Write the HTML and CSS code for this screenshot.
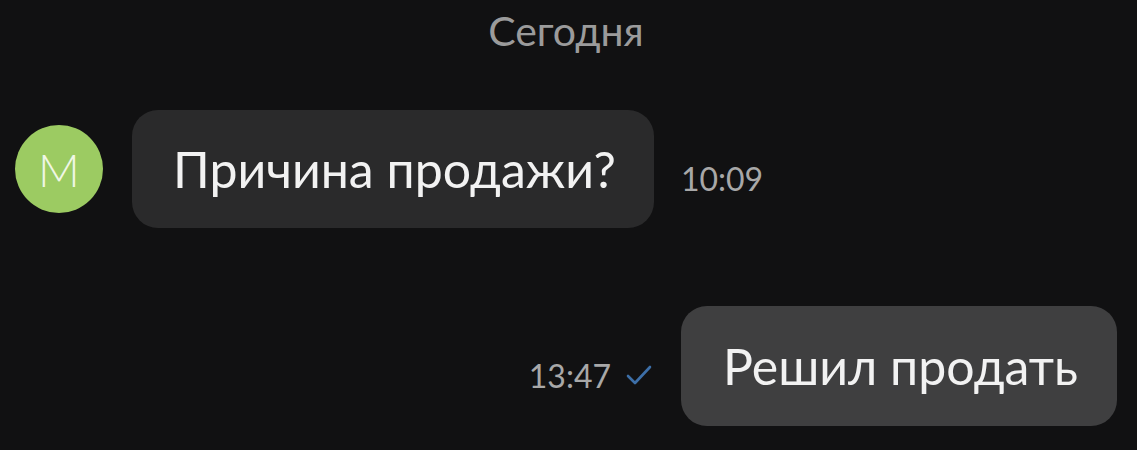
FILE: index.html
```html
<!DOCTYPE html>
<html lang="ru">
<head>
    <meta charset="UTF-8">
    <meta name="viewport" content="width=device-width, initial-scale=1.0">
    <title>Чат</title>
    <link rel="stylesheet" href="styles.css">
</head>
<body>
    <div class="chat">
        <div class="day">Сегодня</div>

        <div class="row incoming">
            <div class="avatar">M</div>
            <div class="bubble">Причина продажи?</div>
            <span class="time">10:09</span>
        </div>

        <div class="row outgoing">
            <span class="time">13:47</span>
            <svg class="check" width="28" height="22" viewBox="0 0 28 22">
                <path d="M3 12 L10 19 L25 3" fill="none" stroke="#3d6fa8" stroke-width="2.6" stroke-linecap="round" stroke-linejoin="round"/>
            </svg>
            <div class="bubble own">Решил продать</div>
        </div>
    </div>
</body>
</html>
```

FILE: styles.css
```css
* {
    margin: 0;
    padding: 0;
    box-sizing: border-box;
    font-family: Lato, "Noto Sans", sans-serif;
}

body {
    background-color: #111112;
    width: 1137px;
    height: 450px;
    overflow: hidden;
}

.chat {
    display: flex;
    flex-direction: column;
    padding: 0 20px 0 15px;
}

.day {
    text-align: center;
    color: #9b9b9b;
    font-size: 41px;
    line-height: 44px;
    padding-top: 9px;
    margin-bottom: 57px;
}

.row {
    display: flex;
    align-items: center;
}

.incoming {
    margin-bottom: 78px;
}

.outgoing {
    justify-content: flex-end;
}

.avatar {
    width: 88px;
    height: 88px;
    border-radius: 50%;
    background-color: #9ccb62;
    color: #f0f7e6;
    font-size: 46px;
    font-weight: 300;
    display: flex;
    align-items: center;
    justify-content: center;
    margin-right: 29px;
}

.bubble {
    background-color: #2a2a2b;
    color: #f2f2f2;
    font-size: 50px;
    line-height: 58px;
    padding: 30px 38px 30px 41px;
    border-radius: 26px;
}

.bubble.own {
    background-color: #3f3f40;
    padding: 31px 39px 31px 42px;
}

.time {
    color: #a8a8a8;
    font-size: 32px;
    margin-top: 18px;
}

.incoming .time {
    margin-left: 27px;
}

.check {
    margin: 18px 28px 0 14px;
}
```
